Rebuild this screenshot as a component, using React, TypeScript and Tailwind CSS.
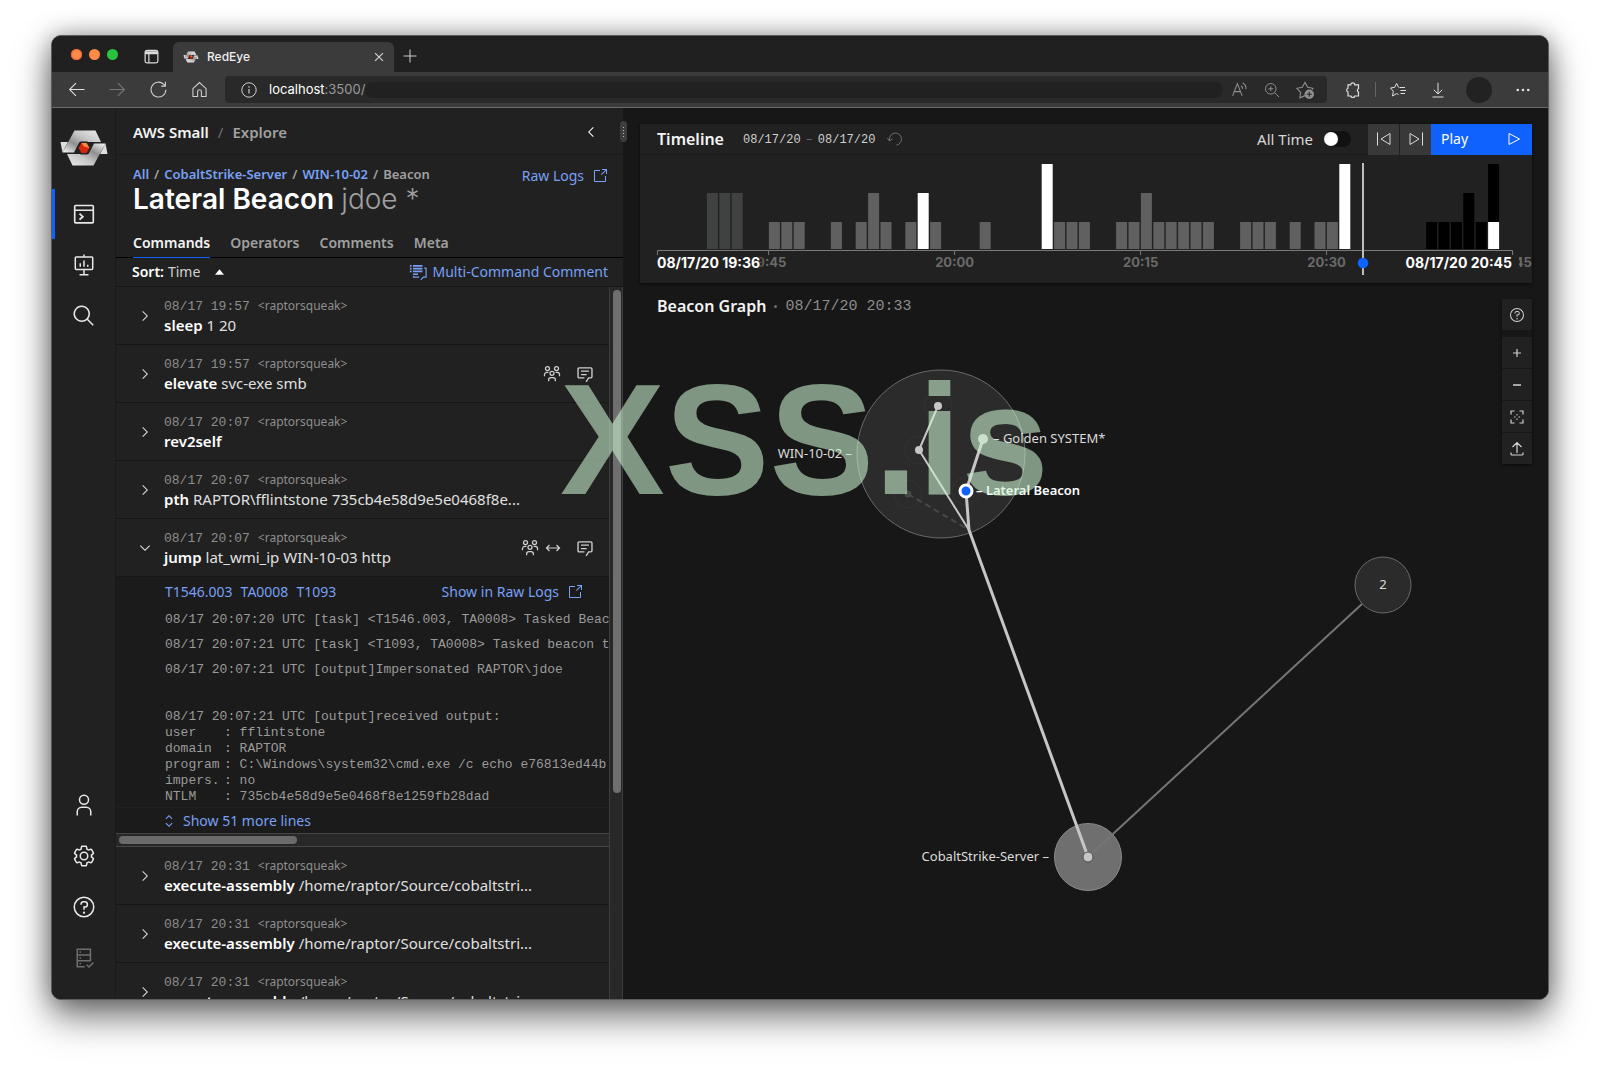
import type { ReactNode } from 'react';
import clsx from 'clsx';

interface IconProps {
  className?: string;
  children: ReactNode;
}

// 32px grid, filled
function Glyph({ className = 'h-4 w-4', children }: IconProps) {
  return (
    <svg viewBox="0 0 32 32" fill="currentColor" aria-hidden="true" className={clsx('shrink-0', className)}>
      {children}
    </svg>
  );
}

// 16px grid, stroked
function Line({ className = 'h-4 w-4', children }: IconProps) {
  return (
    <svg
      viewBox="0 0 16 16"
      fill="none"
      stroke="currentColor"
      strokeWidth="1"
      aria-hidden="true"
      className={clsx('shrink-0', className)}
    >
      {children}
    </svg>
  );
}

const ChevronRight = () => (
  <Glyph>
    <path d="M22 16 12 26 10.6 24.6 19.2 16 10.6 7.4 12 6z" />
  </Glyph>
);

const ChevronDown = () => (
  <Glyph>
    <path d="M16 22 6 12 7.4 10.6 16 19.2 24.6 10.6 26 12z" />
  </Glyph>
);

const ChevronLeft = () => (
  <Glyph>
    <path d="M10 16 20 6 21.4 7.4 12.8 16 21.4 24.6 20 26z" />
  </Glyph>
);

const Launch = () => (
  <Glyph>
    <path d="M26 28H6a2 2 0 0 1-2-2V6a2 2 0 0 1 2-2h10v2H6v20h20V16h2v10a2 2 0 0 1-2 2z" />
    <path d="M20 2v2h6.6L18 12.6l1.4 1.4L28 5.4V12h2V2z" />
  </Glyph>
);

const Help = ({ className }: { className?: string }) => (
  <Glyph className={className}>
    <path d="M16 2a14 14 0 1 0 14 14A14 14 0 0 0 16 2zm0 26a12 12 0 1 1 12-12 12 12 0 0 1-12 12z" />
    <circle cx="16" cy="23.5" r="1.5" />
    <path d="M17 8h-1.5a4.49 4.49 0 0 0-4.5 4.5v.5h2v-.5a2.5 2.5 0 0 1 2.5-2.5H17a2.5 2.5 0 0 1 0 5h-2v4.5h2V17a4.5 4.5 0 0 0 0-9z" />
  </Glyph>
);

const People = () => (
  <Line className="h-[18px] w-[18px]">
    <g strokeWidth="1.100">
      <circle cx="4" cy="3.200" r="1.800" />
      <circle cx="12" cy="3.200" r="1.800" />
      <circle cx="8" cy="7.400" r="1.800" />
      <path d="M1.300 10V8.600a2 2 0 0 1 2-2h1.500M14.700 10V8.600a2 2 0 0 0-2-2h-1.500M5 14.500v-1.200a2 2 0 0 1 2-2h2a2 2 0 0 1 2 2v1.200" />
    </g>
  </Line>
);

const Comment = () => (
  <Line className="h-[18px] w-[18px]">
    <path
      d="M7.500 11.500H2.800a1 1 0 0 1-1-1v-7a1 1 0 0 1 1-1h10.400a1 1 0 0 1 1 1v7a1 1 0 0 1-1 1h-2L9 15M4.500 5.500h7M4.500 8.500h5"
      strokeWidth="1.200"
    />
  </Line>
);

const Lateral = () => (
  <Line>
    <path d="M1.500 8h13M4.500 5l-3 3 3 3M11.500 5l3 3-3 3" strokeWidth="1.200" />
  </Line>
);

function Logo({ className, id }: { className: string; id: string }) {
  const ribbon = `url(#${id})`;
  return (
    <svg viewBox="0 0 48 38" aria-hidden="true" className={className}>
      <defs>
        <linearGradient id={id} x1="0" y1="1" x2="1" y2="0">
          <stop offset="0" stopColor="#fafafa" />
          <stop offset=".35" stopColor="#8f8f8f" />
          <stop offset=".6" stopColor="#c4c4c4" />
          <stop offset="1" stopColor="#ececec" />
        </linearGradient>
      </defs>
      {[0, 180].map((turn) => (
        <g key={turn} transform={`rotate(${turn} 24 19)`}>
          <path d="M0.500 13h7.500L2.500 23.500z" fill="#dedede" />
          <path d="M2.500 23.500 14.500 1.500h21L41 13H19.500l-5.500 10.500z" fill={ribbon} />
        </g>
      ))}
      <path d="m20.500 12.500h7l4 6.500-4 6.500h-7l-4-6.500z" fill="#212121" />
      <path d="m21.500 14h5l3 5-3 5h-5l-3-5z" fill="#d6260f" />
      <path d="m21.500 14h5l3 5-5.500-1.500z" fill="#ff8a3c" />
    </svg>
  );
}

function BrowserChrome() {
  return (
    <div className="font-['Inter',sans-serif] text-[#d0d0d0]">
      <div className="flex h-9 items-end bg-[#202020]">
        <div className="flex h-9 items-center gap-[7px] pl-[19px]">
          <span className="h-[11px] w-[11px] rounded-full bg-[#ff8a48] ring-1 ring-[#f0603a] ring-inset" />
          <span className="h-[11px] w-[11px] rounded-full bg-[#ff8a48]" />
          <span className="h-[11px] w-[11px] rounded-full bg-[#28c440]" />
        </div>
        <button aria-label="Tab actions" className="mb-2 ml-[26px] text-[#dcdcdc]">
          <Line className="h-[15px] w-[15px]">
            <rect x="1.200" y="1.500" width="13.600" height="13.300" rx="2" strokeWidth="1.300" />
            <path d="M1.200 4h13.600" strokeWidth="3" />
            <path d="M5.200 5v9.500" strokeWidth="1.300" />
          </Line>
        </button>
        <div className="ml-[14px] flex h-[30px] w-[221px] items-center rounded-t-md bg-[#3b3b3b] pr-2 pl-[10px]">
          <Logo className="h-3 w-4" id="favicon" />
          <span className="ml-2 flex-1 text-xs font-medium text-[#efefef]">RedEye</span>
          <button aria-label="Close tab">
            <Line className="h-[14px] w-[14px]">
              <path d="m3.500 3.500 9 9m0-9-9 9" strokeWidth="1.400" />
            </Line>
          </button>
        </div>
        <button aria-label="New tab" className="mb-2 ml-2">
          <Line>
            <path d="M8 1.500v13M1.500 8h13" />
          </Line>
        </button>
      </div>
      <div className="flex h-9 items-center border-b border-[#6b6b6b] bg-[#3b3b3b] pr-[18px] pl-4">
        <div className="flex items-center gap-6">
          <button aria-label="Back" className="text-[#e0e0e0]">
            <Line className="h-[17px] w-[17px]">
              <path d="M7.500 2 1.500 8l6 6M1.500 8h14" />
            </Line>
          </button>
          <button aria-label="Forward" className="text-[#777777]">
            <Line className="h-[17px] w-[17px]">
              <path d="m8.500 2 6 6-6 6M14.500 8h-14" />
            </Line>
          </button>
          <button aria-label="Reload">
            <Line className="h-[17px] w-[17px]">
              <path d="M15 8.300A7 7 0 1 1 12.800 3l1.700 1.700M14.500.8v4h-4" />
            </Line>
          </button>
          <button aria-label="Home">
            <Line className="h-[17px] w-[17px]">
              <path d="M1.800 7.200 8 1.500l6.200 5.700v7.300h-4.400V10a1.800 1.800 0 0 0-3.600 0v4.500H1.800z" />
            </Line>
          </button>
        </div>
        <div className="ml-[17px] flex h-[27px] flex-1 items-center rounded bg-[#292929] pr-[13px] pl-4">
          <Line>
            <circle cx="8" cy="8" r="7.200" />
            <path d="M8 7v4.500M8 4.300v1.400" strokeWidth="1.200" />
          </Line>
          <span className="ml-3 text-[13px] text-white">
            localhost<span className="text-[#9a9a9a]">:3500/</span>
          </span>
          <span className="h-4 flex-1 rounded-full bg-[#212121]" />
          <div className="ml-2 flex items-center gap-4 text-[#8f8f8f]">
            <button aria-label="Read aloud">
              <Line className="h-[17px] w-[17px]">
                <path d="M1.500 14 6 2.500 10.500 14M3 10h6M9.500 4.500a3 3 0 0 1 1.300 3M11 1.800a6 6 0 0 1 3 6" />
              </Line>
            </button>
            <button aria-label="Zoom">
              <Line>
                <circle cx="6.800" cy="6.800" r="5.300" />
                <path d="m10.700 10.700 4.300 4.300M6.800 4.300v5M4.300 6.800h5" />
              </Line>
            </button>
            <button aria-label="Add to favorites">
              <Line className="h-[18px] w-[18px]">
                <path d="M8 13 3.500 15l.6-4.900L.8 6.500l4.700-.9L8 1.300l2.400 4.300 4.800.9-1 1.200" />
                <circle cx="11.800" cy="11.800" r="4.200" fill="currentColor" stroke="none" />
                <path d="M11.800 9.500v4.600M9.500 11.800h4.600" stroke="#292929" />
              </Line>
            </button>
          </div>
        </div>
        <div className="ml-[18px] flex items-center text-[#e0e0e0]">
          <button aria-label="Extensions">
            <Line>
              <path
                d="M3 2.800h2.700a2 2 0 0 1 4 0H13.500v3.700a2 2 0 0 0 0 3.600v3.900H9.800a2 2 0 0 1-3.900 0H3V10a2 2 0 0 1 0-3.800z"
                strokeWidth="1.200"
              />
            </Line>
          </button>
          <span className="mx-[14px] h-[15px] w-px bg-[#666666]" />
          <button aria-label="Favorites">
            <Line>
              <path d="M9.500 5.500H15M10.500 8.500H16M10.500 11.500H15M8.500 12.500l-1.800-.9L2.500 14l.8-4.700L.5 6l4.200-.7L6.600 1.500l2 4" />
            </Line>
          </button>
          <button aria-label="Downloads" className="ml-6">
            <Line>
              <path d="M8 .8v11M3.800 7.800 8 12l4.200-4.200M2.500 15h11" />
            </Line>
          </button>
          <button aria-label="Profile" className="ml-5 h-[26px] w-[26px] rounded-full bg-[#222222]" />
          <button aria-label="Settings and more" className="ml-6">
            <Glyph className="h-[14px] w-[14px]">
              <circle cx="4" cy="16" r="3" />
              <circle cx="16" cy="16" r="3" />
              <circle cx="28" cy="16" r="3" />
            </Glyph>
          </button>
        </div>
      </div>
    </div>
  );
}

interface NavButtonProps {
  label: string;
  active?: boolean;
  muted?: boolean;
  children: ReactNode;
}

function NavButton({ label, active, muted, children }: NavButtonProps) {
  return (
    <button
      aria-label={label}
      className={clsx(
        'flex h-[50px] w-full items-center justify-center border-l-[3px] pr-[3px]',
        active ? 'border-[#0f62fe]' : 'border-transparent',
        muted ? 'text-[#6f6f6f]' : 'text-[#e8e8e8]',
      )}
    >
      {children}
    </button>
  );
}

function Sidebar() {
  return (
    <nav className="flex w-16 shrink-0 flex-col items-center gap-px border-r border-[#1b1b1b] bg-[#212121] pt-[21px] pb-4">
      <Logo className="mb-[21px] h-[38px] w-12" id="brand" />
      <NavButton label="Explore" active>
        <Line className="h-6 w-6">
          <rect x="1.800" y="2.300" width="12.400" height="11.600" rx=".6" strokeWidth="1.100" />
          <path d="M2 5.500h12" />
          <path d="m5 7.800 2.200 2-2.200 2" strokeWidth="1.200" />
        </Line>
      </NavButton>
      <NavButton label="Presentation">
        <Line className="h-6 w-6">
          <rect x="2.200" y="2.600" width="11.600" height="8.400" rx=".6" />
          <path d="M8 1v1.500M8 11v3.500M5 14.500h6M5.500 6.800v2.400M8 5v4.200M10.500 7.800v1.400" />
        </Line>
      </NavButton>
      <NavButton label="Search">
        <Glyph className="h-6 w-6">
          <path d="m29 27.600-7.550-7.550a11 11 0 1 0-1.400 1.400L27.600 29zM4 13a9 9 0 1 1 9 9 9 9 0 0 1-9-9z" />
        </Glyph>
      </NavButton>
      <div className="flex-1" />
      <NavButton label="Account">
        <Glyph className="h-6 w-6">
          <path d="M16 4a5 5 0 1 1-5 5 5 5 0 0 1 5-5m0-2a7 7 0 1 0 7 7 7 7 0 0 0-7-7z" />
          <path d="M26 30h-2v-5a5 5 0 0 0-5-5h-6a5 5 0 0 0-5 5v5H6v-5a7 7 0 0 1 7-7h6a7 7 0 0 1 7 7z" />
        </Glyph>
      </NavButton>
      <NavButton label="Settings">
        <Glyph className="h-6 w-6">
          <path d="M27,16.76c0-.25,0-.5,0-.76s0-.51,0-.77l1.92-1.68A2,2,0,0,0,29.3,11L26.94,7a2,2,0,0,0-1.73-1,2,2,0,0,0-.64.1l-2.43.82a11.35,11.35,0,0,0-1.31-.75l-.51-2.52a2,2,0,0,0-2-1.61H13.64a2,2,0,0,0-2,1.61l-.51,2.52a11.48,11.48,0,0,0-1.32.75L7.43,6.06A2,2,0,0,0,6.79,6,2,2,0,0,0,5.06,7L2.7,11a2,2,0,0,0,.41,2.51L5,15.24c0,.25,0,.5,0,.76s0,.51,0,.77L3.11,18.45A2,2,0,0,0,2.7,21L5.06,25a2,2,0,0,0,1.73,1,2,2,0,0,0,.64-.1l2.43-.82a11.35,11.35,0,0,0,1.31.75l.51,2.52a2,2,0,0,0,2,1.61h4.72a2,2,0,0,0,2-1.61l.51-2.52a11.48,11.48,0,0,0,1.32-.75l2.42.82a2,2,0,0,0,.64.1,2,2,0,0,0,1.73-1L29.3,21a2,2,0,0,0-.41-2.51ZM25.21,24l-3.43-1.16a8.86,8.86,0,0,1-2.71,1.57L18.36,28H13.64l-.71-3.55a9.36,9.36,0,0,1-2.7-1.57L6.79,24,4.43,20l2.72-2.4a8.9,8.9,0,0,1,0-3.13L4.43,12,6.79,8l3.43,1.16a8.86,8.86,0,0,1,2.71-1.57L13.64,4h4.72l.71,3.55a9.36,9.36,0,0,1,2.7,1.57L25.21,8,27.57,12l-2.72,2.4a8.9,8.9,0,0,1,0,3.13L27.57,20Z" />
          <path d="M16 22a6 6 0 1 1 6-6 5.940 5.940 0 0 1-6 6zm0-10a3.910 3.910 0 0 0-4 4 3.910 3.910 0 0 0 4 4 3.910 3.910 0 0 0 4-4 3.910 3.910 0 0 0-4-4z" />
        </Glyph>
      </NavButton>
      <NavButton label="Help">
        <Help className="h-6 w-6" />
      </NavButton>
      <NavButton label="Server status" muted>
        <Line className="h-6 w-6">
          <path d="M8.500 13.800H3.500V2.200h8.800v8M3.500 6h8.800M3.500 9.900h8.800M9.800 12.500l1.500 1.500 3-3" />
          <path d="M5 4h1M5 8h1M5 11.800h1" />
        </Line>
      </NavButton>
    </nav>
  );
}

interface Command {
  time: string;
  name: string;
  args: string;
  shared?: boolean;
  lateral?: boolean;
  open?: boolean;
}

const commands: Command[] = [
  { time: '08/17 19:57', name: 'sleep', args: '1 20' },
  { time: '08/17 19:57', name: 'elevate', args: 'svc-exe smb', shared: true },
  { time: '08/17 20:07', name: 'rev2self', args: '' },
  { time: '08/17 20:07', name: 'pth', args: 'RAPTOR\\fflintstone 735cb4e58d9e5e0468f8e...' },
  { time: '08/17 20:07', name: 'jump', args: 'lat_wmi_ip WIN-10-03 http', shared: true, lateral: true, open: true },
];

const laterCommands: Command[] = [1, 2, 3].map(() => ({
  time: '08/17 20:31',
  name: 'execute-assembly',
  args: '/home/raptor/Source/cobaltstri...',
}));

function CommandRow({ command }: { command: Command }) {
  return (
    <div className="flex h-[58px] shrink-0 items-center border-b border-[#161616] pr-[15px] pl-[21px]">
      <button aria-label={command.open ? 'Collapse' : 'Expand'} className="mr-[11px] text-[#e0e0e0]">
        {command.open ? <ChevronDown /> : <ChevronRight />}
      </button>
      <div className="min-w-0 flex-1 whitespace-nowrap">
        <p className="text-xs leading-[18px] text-[#8d8d8d]">
          <span className="font-['Liberation_Mono',monospace] text-[13px]">{command.time}</span>
          <span className="ml-2">&lt;raptorsqueak&gt;</span>
        </p>
        <p className="text-[15px] leading-[18px] text-[#e0e0e0]">
          <b className="font-semibold text-white">{command.name}</b> {command.args}
        </p>
      </div>
      {command.shared && (
        <div className="flex items-center gap-[6px] text-[#d0d0d0]">
          <People />
          {command.lateral && <Lateral />}
          <button aria-label="Comments" className="ml-[9px]">
            <Comment />
          </button>
        </div>
      )}
    </div>
  );
}

const taskLog = [
  '08/17 20:07:20 UTC [task] <T1546.003, TA0008> Tasked Beacon to jump',
  '08/17 20:07:21 UTC [task] <T1093, TA0008> Tasked beacon to spawn',
  '08/17 20:07:21 UTC [output]Impersonated RAPTOR\\jdoe',
];

const outputLog = [
  '08/17 20:07:21 UTC [output]received output:',
  'user\t: fflintstone',
  'domain\t: RAPTOR',
  'program\t: C:\\Windows\\system32\\cmd.exe /c echo e76813ed44b',
  'impers.\t: no',
  'NTLM\t: 735cb4e58d9e5e0468f8e1259fb28dad',
].join('\n');

function CommandOutput() {
  return (
    <div className="shrink-0 bg-[#1b1b1b]">
      <div className="flex h-[29px] items-center pr-[26px] pl-[49px] text-sm text-[#78a0f5]">
        <div className="flex flex-1 gap-2">
          <a href="#t1546">T1546.003</a>
          <a href="#ta0008">TA0008</a>
          <a href="#t1093">T1093</a>
        </div>
        <a href="#raw" className="flex items-center gap-2">
          Show in Raw Logs <Launch />
        </a>
      </div>
      <div className="mt-px overflow-hidden pl-[49px] font-['Liberation_Mono',monospace] text-[13px] whitespace-pre text-[#9a9a9a]">
        {taskLog.map((line) => (
          <p key={line} className="leading-[25px]">
            {line}
          </p>
        ))}
        <pre className="mt-[27px] font-['Liberation_Mono',monospace] leading-4 [tab-size:59px]">{outputLog}</pre>
      </div>
      <button className="mt-[2px] flex h-[26px] w-full items-center gap-[6px] border-t border-[#202020] pl-[45px] text-sm text-[#78a0f5]">
        <Glyph>
          <path d="m16 28-7-7 1.400-1.400L16 25.200l5.600-5.600L23 21zM16 4l7 7-1.400 1.400L16 6.800l-5.600 5.600L9 11z" />
        </Glyph>
        Show 51 more lines
      </button>
      <div className="h-[14px] border-y border-[#454545] bg-[#282828] px-[3px] py-[2px]">
        <div className="h-2 w-[178px] rounded-full bg-[#6b6b6b]" />
      </div>
    </div>
  );
}

function ExplorePanel() {
  return (
    <section className="flex w-[507px] shrink-0 flex-col bg-[#212121]">
      <header className="flex h-[47px] items-center border-b border-[#1a1a1a] pt-[2px] pr-6 pl-[17px] text-[15px] font-semibold">
        <span className="text-[#f4f4f4]">AWS Small</span>
        <span className="mx-[9px] font-normal text-[#6f6f6f]">/</span>
        <span className="flex-1 text-[#a0a0a0]">Explore</span>
        <button aria-label="Collapse panel" className="text-white">
          <ChevronLeft />
        </button>
      </header>
      <div className="flex items-start justify-between pt-[10px] pr-[15px] pl-[17px]">
        <div>
          <p className="flex gap-[5px] text-[13px] leading-[18px] font-semibold text-[#a0a0a0]">
            <a href="#all" className="text-[#78a0f5]">All</a>
            <span>/</span>
            <a href="#server" className="text-[#78a0f5]">CobaltStrike-Server</a>
            <span>/</span>
            <a href="#host" className="text-[#78a0f5]">WIN-10-02</a>
            <span>/</span>
            <span>Beacon</span>
          </p>
          <h1 className="font-['Inter',sans-serif] text-[28px] leading-8 font-semibold text-white">
            Lateral Beacon <span className="font-light text-[#a0a0a0]">jdoe *</span>
          </h1>
        </div>
        <a href="#raw" className="mt-px flex items-center gap-2 text-sm text-[#78a0f5]">
          Raw Logs <Launch />
        </a>
      </div>
      <div
        role="tablist"
        className="mt-[13px] flex gap-5 border-b border-black px-[17px] text-sm leading-[29px] font-semibold text-[#a0a0a0]"
      >
        <button role="tab" aria-selected="true" className="-mb-px border-b border-[#0f62fe] text-[#f4f4f4]">
          Commands
        </button>
        <button role="tab" aria-selected="false">Operators</button>
        <button role="tab" aria-selected="false">Comments</button>
        <button role="tab" aria-selected="false">Meta</button>
      </div>
      <div className="flex h-[29px] shrink-0 items-center justify-between border-b border-[#161616] pr-[15px] pl-4 text-sm">
        <button className="flex items-center text-[#d0d0d0]">
          <b className="mr-1 font-semibold text-white">Sort:</b> Time
          <svg viewBox="0 0 10 6" className="ml-[15px] h-[6px] w-[9px] fill-white">
            <path d="M5 0 10 6H0z" />
          </svg>
        </button>
        <button className="flex items-center gap-[6px] text-[#78a0f5]">
          <Line className="h-[18px] w-[18px]">
            <path d="M3.500 2.500H12M3.500 5H12M3.500 7.500H12M3.500 10H8" strokeWidth="1.500" />
            <path d="M.8 2.500h1.500M.8 5h1.500M.8 7.500h1.500" strokeWidth="1.500" />
            <path d="M13.500 4.500h1.700v8h-2.500L10.500 15M9 12.500H4v-1" />
          </Line>
          Multi-Command Comment
        </button>
      </div>
      <div className="flex min-h-0 flex-1">
        <div className="flex min-w-0 flex-1 flex-col overflow-hidden">
          {commands.map((command, i) => (
            <CommandRow key={i} command={command} />
          ))}
          <CommandOutput />
          {laterCommands.map((command, i) => (
            <CommandRow key={i} command={command} />
          ))}
        </div>
        <div className="w-[14px] shrink-0 border-x border-[#3d3d3d] bg-[#282828] pt-[3px] pl-[3px]">
          <div className="h-[71%] w-2 rounded-full bg-[#6f6f6f]" />
        </div>
      </div>
    </section>
  );
}

type Tone = 'dim' | 'mid' | 'white' | 'black';

const tones: Record<Tone, string> = {
  dim: '#404141',
  mid: '#606060',
  white: '#ffffff',
  black: '#000000',
};

// [minute, height, tone]
const bars: [number, number, Tone][] = [
  ...[4, 5, 6].map((m): [number, number, Tone] => [m, 56, 'dim']),
  ...[9, 10, 11, 14, 16, 18, 20, 22, 26, 32, 33, 34, 37, 38, 40, 41, 42, 43, 44, 47, 48, 49, 51, 53, 54].map(
    (m): [number, number, Tone] => [m, 27, 'mid'],
  ),
  [17, 56, 'mid'],
  [39, 56, 'mid'],
  [21, 56, 'white'],
  [31, 85, 'white'],
  [55, 85, 'white'],
  ...[62, 63, 64, 66].map((m): [number, number, Tone] => [m, 27, 'black']),
  [65, 56, 'black'],
  [67, 85, 'black'],
  [67, 27, 'white'],
];

const ticks = [
  { minute: 9, label: '19:45' },
  { minute: 24, label: '20:00' },
  { minute: 39, label: '20:15' },
  { minute: 54, label: '20:30' },
  { minute: 69, label: '20:45' },
];

const minuteX = (minute: number) => 17 + minute * 12.4;

function TimelineChart() {
  return (
    <svg
      viewBox="0 0 892 128"
      className="block w-full font-['Inter',sans-serif] text-[13px] font-bold"
      role="img"
      aria-label="Commands per minute"
    >
      <defs>
        <linearGradient id="fadeStart" x1="0" x2="1" y1="0" y2="0">
          <stop offset=".9" stopColor="#212121" />
          <stop offset="1" stopColor="#212121" stopOpacity="0" />
        </linearGradient>
      </defs>
      {bars.map(([minute, height, tone]) => (
        <rect
          key={`${minute}-${tone}`}
          x={minuteX(minute) + 0.3}
          y={94 - height}
          width="11"
          height={height}
          fill={tones[tone]}
        />
      ))}
      <path d="M17.500 100v-4.500h855v4.500" fill="none" stroke="#7a7a7a" />
      {ticks.map(({ minute, label }) => (
        <g key={minute}>
          <path d={`M${minuteX(minute)} 95.500v4.500`} stroke="#7a7a7a" />
          <text x={minuteX(minute)} y="112" textAnchor="middle" fill="#6a6a6a">
            {label}
          </text>
        </g>
      ))}
      <rect x="12" y="101" width="114" height="14" fill="url(#fadeStart)" />
      <rect x="760" y="101" width="119" height="14" fill="#212121" />
      <text x="17" y="113" fill="#ffffff" className="text-sm">08/17/20 19:36</text>
      <text x="872" y="113" textAnchor="end" fill="#ffffff" className="text-sm">08/17/20 20:45</text>
      <path d="M723 8v112" stroke="#bdbdbd" strokeWidth="2" />
      <circle cx="723" cy="108" r="5.300" fill="#0f62fe" />
    </svg>
  );
}

function Timeline() {
  return (
    <section className="bg-[#212121] shadow-[0_1px_3px_rgba(0,0,0,0.6)]">
      <header className="flex h-[31px] items-center border-b border-[#1a1a1a] pl-[17px]">
        <h2 className="text-base font-semibold text-[#f4f4f4]">Timeline</h2>
        <span className="ml-[19px] flex items-center gap-[5px] pt-[2px] font-['Liberation_Mono',monospace] text-xs text-[#d0d0d0]">
          08/17/20 <span className="text-[#6f6f6f]">–</span> 08/17/20
        </span>
        <button aria-label="Reset range" className="ml-3 text-[#6f6f6f]">
          <Line>
            <path d="M2.500 9.500V8a6 6 0 1 1 7 6M.3 7l2.200 3 3-2.200" />
          </Line>
        </button>
        <span className="flex-1" />
        <label className="flex items-center gap-[11px] text-[15px] text-[#d8d8d8]">
          All Time
          <input
            type="checkbox"
            className="h-4 w-[27px] appearance-none rounded-full bg-[#111111] before:block before:h-[14px] before:w-[14px] before:translate-y-px before:rounded-full before:bg-white checked:before:translate-x-3"
          />
        </label>
        <div className="ml-[17px] flex gap-px">
          <button
            aria-label="Step back"
            className="flex h-[31px] w-[31px] items-center justify-center bg-[#393939] text-[#dcdcdc]"
          >
            <Line>
              <path d="M1.500 1.500v13M14 2.500v11L5 8z" />
            </Line>
          </button>
          <button
            aria-label="Step forward"
            className="flex h-[31px] w-[31px] items-center justify-center bg-[#393939] text-[#dcdcdc]"
          >
            <Line>
              <path d="M14.500 1.500v13M2 2.500v11L11 8z" />
            </Line>
          </button>
        </div>
        <button className="flex h-[31px] w-[101px] items-center justify-between bg-[#0f62fe] pr-[10px] pl-[10px] text-sm text-white">
          Play
          <Line>
            <path d="M3 2.500v11L13.500 8z" />
          </Line>
        </button>
      </header>
      <TimelineChart />
    </section>
  );
}

function BeaconGraph() {
  return (
    <svg
      viewBox="-1 -1 925 715"
      preserveAspectRatio="xMidYMin meet"
      className="absolute inset-0 h-full w-full text-[13px]"
      role="img"
      aria-label="Beacon graph"
    >
      <circle cx="317" cy="170" r="84" fill="#2b2b2b" stroke="#6a6a6a" />
      <g fill="none" stroke="#333333">
        <circle cx="314" cy="122" r="14" />
        <circle cx="295" cy="166" r="14" />
        <circle cx="342" cy="207" r="14" />
        <circle cx="284" cy="210" r="14" />
      </g>
      <circle cx="759" cy="301" r="28" fill="#2b2b2b" stroke="#6a6a6a" />
      <circle cx="464" cy="573" r="33.500" fill="#6f6f6f" stroke="#8a8a8a" />
      <path d="M738 320 464 573" stroke="#757575" strokeWidth="2" />
      <path d="m284 210 61 36" stroke="#484848" strokeWidth="2" strokeDasharray="6 4" />
      <circle cx="284" cy="210" r="3.500" fill="#484848" />
      <g fill="none" stroke="#c6c6c6">
        <path d="m314 122-19 44 50 80" strokeWidth="2" />
        <path d="m359 155-17 52 3 39 119 327" strokeWidth="3" />
      </g>
      <g fill="#c6c6c6">
        <circle cx="314" cy="122" r="4" />
        <circle cx="295" cy="166" r="4" />
        <circle cx="359" cy="155" r="5" />
        <circle cx="464" cy="573" r="5" stroke="#4f4f4f" />
      </g>
      <circle cx="342" cy="207" r="6" fill="#0f62fe" stroke="#ffffff" strokeWidth="3" />
      <g fill="#dcdcdc">
        <text x="228" y="174" textAnchor="end">WIN-10-02 –</text>
        <text x="369" y="159">– Golden SYSTEM*</text>
        <text x="352" y="211" fill="#ffffff" className="font-semibold">– Lateral Beacon</text>
        <text x="425" y="577" textAnchor="end">CobaltStrike-Server –</text>
        <text x="759" y="305" textAnchor="middle">2</text>
      </g>
    </svg>
  );
}

const toolButton = 'flex h-[31px] w-[30px] items-center justify-center bg-[#212121] text-[#d0d0d0]';

function GraphPanel() {
  return (
    <main className="relative flex min-w-0 flex-1 flex-col bg-[#171717] pt-4">
      <span className="absolute top-[13px] -left-[3px] flex h-[21px] w-[7px] flex-col items-center justify-center gap-[2px] rounded bg-[#3d3d3d]">
        {[0, 1, 2, 3].map((dot) => (
          <span key={dot} className="h-px w-px bg-[#c0c0c0]" />
        ))}
      </span>
      <div className="pr-4 pl-[17px]">
        <Timeline />
      </div>
      <div className="relative min-h-0 flex-1">
        <BeaconGraph />
        <div className="relative flex items-start pt-4 pr-4 pl-[34px]">
          <h2 className="flex flex-1 items-center text-base leading-3 font-semibold text-[#f4f4f4]">
            Beacon Graph
            <span className="mx-2 h-[3px] w-[3px] rounded-full bg-[#6f6f6f]" />
            <span className="pt-[2px] font-['Liberation_Mono',monospace] text-[15px] font-normal text-[#8d8d8d]">
              08/17/20 20:33
            </span>
          </h2>
          <div className="shadow-[0_1px_3px_rgba(0,0,0,0.6)]">
            <button aria-label="Legend" className={toolButton}>
              <Help />
            </button>
            <div className="mt-[7px] flex flex-col gap-px bg-[#171717]">
              <button aria-label="Zoom in" className={toolButton}>
                <Line>
                  <path d="M8 4v8M4 8h8" strokeWidth="1.200" />
                </Line>
              </button>
              <button aria-label="Zoom out" className={toolButton}>
                <Line>
                  <path d="M4 8h8" strokeWidth="1.500" />
                </Line>
              </button>
              <button aria-label="Fit to view" className={toolButton}>
                <Line>
                  <path d="M5.500 2h-3.500v3.500M10.500 2H14v3.500M5.500 14H2v-3.500M10.500 14H14v-3.500" strokeWidth="1.200" />
                  <path d="M8 5v1.500M8 9.500V11M5 8h1.500M9.500 8H11" />
                </Line>
              </button>
              <button aria-label="Export" className={toolButton}>
                <Line>
                  <path d="M8 12V1.800M3.500 6 8 1.500 12.500 6M2 11.500v1.500a1 1 0 0 0 1 1h10a1 1 0 0 0 1-1v-1.500" strokeWidth="1.200" />
                </Line>
              </button>
            </div>
          </div>
        </div>
      </div>
    </main>
  );
}

export default function App() {
  return (
    <div className="relative flex h-screen bg-white pt-[35px] pr-[51px] pb-[68px] pl-[51px] font-['Noto_Sans',sans-serif]">
      <div className="flex min-w-0 flex-1 flex-col overflow-hidden rounded-[10px] border border-[#5c5c5c] bg-[#171717] shadow-[0_18px_36px_rgba(0,0,0,0.5),0_0_24px_rgba(0,0,0,0.35)]">
        <BrowserChrome />
        <div className="flex min-h-0 flex-1">
          <Sidebar />
          <ExplorePanel />
          <GraphPanel />
        </div>
      </div>
      <span className="pointer-events-none absolute top-[351px] left-[560px] font-['Liberation_Sans',Arial,sans-serif] text-[157px] leading-[177px] font-bold text-[rgba(203,243,208,0.58)]">
        XSS.is
      </span>
    </div>
  );
}
